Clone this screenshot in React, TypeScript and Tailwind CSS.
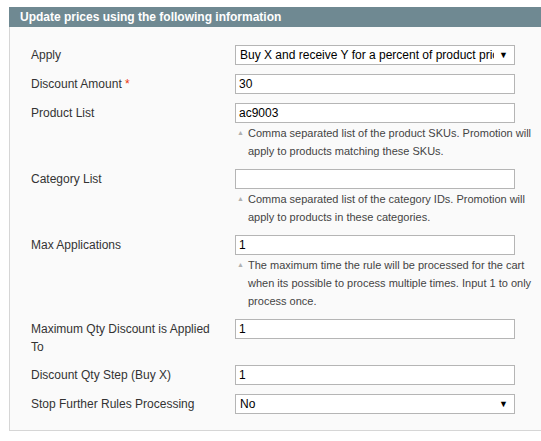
import React from "react";

type Row = {
  label: string;
  required?: boolean;
  kind: "input" | "select";
  value: string;
  note?: string;
};

const rows: Row[] = [
  {
    label: "Apply",
    kind: "select",
    value: "Buy X and receive Y for a percent of product price",
  },
  { label: "Discount Amount", required: true, kind: "input", value: "30" },
  {
    label: "Product List",
    kind: "input",
    value: "ac9003",
    note: "Comma separated list of the product SKUs. Promotion will apply to products matching these SKUs.",
  },
  {
    label: "Category List",
    kind: "input",
    value: "",
    note: "Comma separated list of the category IDs. Promotion will apply to products in these categories.",
  },
  {
    label: "Max Applications",
    kind: "input",
    value: "1",
    note: "The maximum time the rule will be processed for the cart when its possible to process multiple times. Input 1 to only process once.",
  },
  { label: "Maximum Qty Discount is Applied To", kind: "input", value: "1" },
  { label: "Discount Qty Step (Buy X)", kind: "input", value: "1" },
  { label: "Stop Further Rules Processing", kind: "select", value: "No" },
];

const Field: React.FC<{ row: Row }> = ({ row }) => {
  if (row.kind === "select") {
    return (
      <div className="flex h-[20px] w-[280px] items-center border border-[#b5b5b5] bg-white pl-[4px] pr-[6px]">
        <span className="flex-1 overflow-hidden whitespace-nowrap text-[12px] leading-[18px] text-black">
          {row.value}
        </span>
        <span className="ml-[5px] text-[9px] leading-none text-black">▼</span>
      </div>
    );
  }
  return (
    <div className="h-[20px] w-[280px] border border-[#b5b5b5] bg-white pl-[3px] text-[12px] leading-[18px] text-black">
      {row.value}
    </div>
  );
};

const App: React.FC = () => {
  return (
    <div
      className="h-[441px] w-[541px] overflow-hidden bg-white pt-[7px]"
      style={{ fontFamily: '"Liberation Sans", Arial, sans-serif' }}
    >
      <div className="ml-[9px] w-[560px]">
        <div className="h-[20px] bg-[#6f8992] pl-[11px] text-[12px] font-bold leading-[20px] text-white">
          Update prices using the following information
        </div>
        <div className="flex flex-col gap-[9px] border-b border-l border-[#d6d6d6] bg-[#fafafa] pb-[16px] pl-[21px] pt-[18px]">
          {rows.map((row) => (
            <div key={row.label} className="flex items-start">
              <div className="w-[204px] pr-[16px] pt-[1px] text-[12px] leading-[18px] text-[#333]">
                {row.label}
                {row.required && <span className="text-[#eb340a]"> *</span>}
              </div>
              <div className="flex flex-col">
                <Field row={row} />
                {row.note && (
                  <div className="flex pl-[2px] pt-[1px] text-[11px] leading-[18px] text-[#444]">
                    <span className="w-[11px] text-[7px] text-[#b0b0b0]">▲</span>
                    <span className="w-[285px]">{row.note}</span>
                  </div>
                )}
              </div>
            </div>
          ))}
        </div>
      </div>
    </div>
  );
};

export default App;
